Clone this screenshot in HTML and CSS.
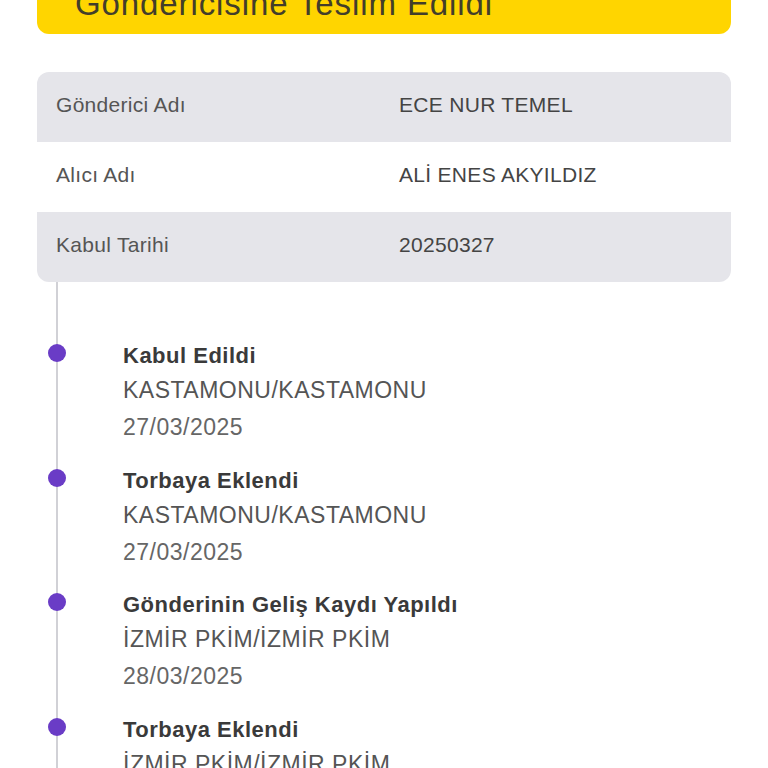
FILE: index.html
```html
<!DOCTYPE html>
<html lang="tr">
<head>
<meta charset="utf-8">
<link rel="stylesheet" href="styles.css">
</head>
<body>
<div class="page">
  <div class="banner">Göndericisine Teslim Edildi</div>
  <div class="info">
    <div class="row shaded"><span class="label">Gönderici Adı</span><span class="value">ECE NUR TEMEL</span></div>
    <div class="row"><span class="label">Alıcı Adı</span><span class="value">ALİ ENES AKYILDIZ</span></div>
    <div class="row shaded"><span class="label">Kabul Tarihi</span><span class="value">20250327</span></div>
  </div>
  <div class="timeline">
    <div class="item">
      <span class="dot"></span>
      <div class="title">Kabul Edildi</div>
      <div class="place">KASTAMONU/KASTAMONU</div>
      <div class="date">27/03/2025</div>
    </div>
    <div class="item">
      <span class="dot"></span>
      <div class="title">Torbaya Eklendi</div>
      <div class="place">KASTAMONU/KASTAMONU</div>
      <div class="date">27/03/2025</div>
    </div>
    <div class="item">
      <span class="dot"></span>
      <div class="title">Gönderinin Geliş Kaydı Yapıldı</div>
      <div class="place">İZMİR PKİM/İZMİR PKİM</div>
      <div class="date">28/03/2025</div>
    </div>
    <div class="item">
      <span class="dot"></span>
      <div class="title">Torbaya Eklendi</div>
      <div class="place">İZMİR PKİM/İZMİR PKİM</div>
      <div class="date">28/03/2025</div>
    </div>
  </div>
</div>
</body>
</html>
```
FILE: styles.css
```css
html, body {
  margin: 0;
  padding: 0;
  background: #ffffff;
  height: 768px;
  overflow: hidden;
}
.page {
  padding: 0 37px;
  font-family: "Liberation Sans", Arial, sans-serif;
}
.banner {
  margin-top: -16px;
  background: #ffd500;
  border-radius: 0 0 12px 12px;
  padding: 0 38px 10px;
  line-height: 40px;
  font-size: 33px;
  letter-spacing: 0.9px;
  color: #433e2a;
}
.info {
  margin-top: 38px;
  border-radius: 12px;
  overflow: hidden;
}
.row {
  box-sizing: border-box;
  display: grid;
  grid-template-columns: 362px 1fr;
  align-items: center;
  height: 70px;
  padding-bottom: 4px;
  font-size: 21px;
  letter-spacing: 0.3px;
}
.row.shaded {
  background: #e5e5ea;
}
.label {
  padding-left: 19px;
  color: #555555;
}
.value {
  color: #444444;
}
.timeline {
  margin-left: 19px;
  border-left: 2px solid #d1d1d6;
  padding: 57px 0 0 65px;
  display: flex;
  flex-direction: column;
  gap: 18.5px;
}
.item {
  position: relative;
}
.dot {
  position: absolute;
  left: -75px;
  top: 5px;
  width: 18px;
  height: 18px;
  border-radius: 50%;
  background: #6a3cc6;
}
.title {
  font-size: 22px;
  font-weight: bold;
  letter-spacing: 0.5px;
  line-height: 33px;
  color: #3a3a3a;
}
.place {
  font-size: 23px;
  letter-spacing: 0.5px;
  line-height: 37px;
  color: #555555;
}
.date {
  font-size: 23px;
  letter-spacing: 0.5px;
  line-height: 36px;
  color: #666666;
}
```
